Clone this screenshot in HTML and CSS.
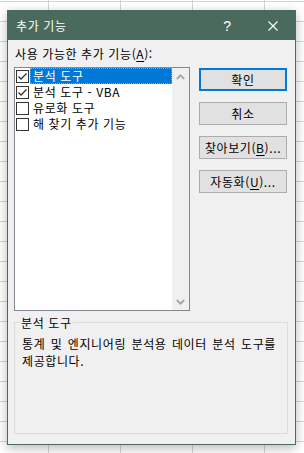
FILE: index.html
```html
<!DOCTYPE html>
<html lang="ko">
<head>
<meta charset="utf-8">
<link rel="stylesheet" href="styles.css">
</head>
<body>
<div class="dialog">
  <div class="titlebar">
    <span class="title">추가 기능</span>
    <span class="tb-btn help">?</span>
    <span class="tb-btn close">
      <svg width="10" height="10" viewBox="0 0 10 10"><path d="M0.5 0.5 L9.5 9.5 M9.5 0.5 L0.5 9.5" stroke="#fff" stroke-width="1.1" fill="none"/></svg>
    </span>
  </div>
  <div class="content">
    <div class="label">사용 가능한 추가 기능(<u>A</u>):</div>
    <div class="main">
      <div class="listbox">
        <ul class="items">
          <li class="item selected">
            <span class="cb"><svg width="11" height="11" viewBox="0 0 11 11"><path d="M1.5 5.5 L4 8 L9.5 2.5" stroke="#333" stroke-width="1.3" fill="none"/></svg></span>
            <span class="text">분석 도구</span>
          </li>
          <li class="item">
            <span class="cb"><svg width="11" height="11" viewBox="0 0 11 11"><path d="M1.5 5.5 L4 8 L9.5 2.5" stroke="#333" stroke-width="1.3" fill="none"/></svg></span>
            <span class="text">분석 도구 - VBA</span>
          </li>
          <li class="item">
            <span class="cb"></span>
            <span class="text">유로화 도구</span>
          </li>
          <li class="item">
            <span class="cb"></span>
            <span class="text">해 찾기 추가 기능</span>
          </li>
        </ul>
        <div class="scrollbar">
          <span class="sb-btn"><svg width="9" height="6" viewBox="0 0 9 6"><path d="M0.8 5 L4.5 1.3 L8.2 5" stroke="#a6a6a6" stroke-width="1.8" fill="none"/></svg></span>
          <span class="sb-btn"><svg width="9" height="6" viewBox="0 0 9 6"><path d="M0.8 1 L4.5 4.7 L8.2 1" stroke="#a6a6a6" stroke-width="1.8" fill="none"/></svg></span>
        </div>
      </div>
      <div class="buttons">
        <button class="btn default">확인</button>
        <button class="btn">취소</button>
        <button class="btn">찾아보기(<u>B</u>)...</button>
        <button class="btn">자동화(<u>U</u>)...</button>
      </div>
    </div>
    <fieldset class="group">
      <legend>분석 도구</legend>
      <p class="desc">통계 및 엔지니어링 분석용 데이터 분석 도구를<br>제공합니다.</p>
    </fieldset>
  </div>
</div>
</body>
</html>
```
FILE: styles.css
```css
* { box-sizing: border-box; }
html, body { margin: 0; padding: 0; }
body {
  width: 304px;
  height: 453px;
  overflow: hidden;
  background-color: #ffffff;
  background-image:
    linear-gradient(to right, #d4d4d4 1px, transparent 1px),
    linear-gradient(to bottom, #d4d4d4 1px, transparent 1px);
  background-size: 72px 100%, 100% 20px;
  background-position: 48px 0, 0 1px;
  font-family: "Noto Sans CJK KR", "Noto Sans", sans-serif;
  font-size: 12px;
  letter-spacing: 0.6px;
  color: #000;
  padding-top: 10px;
  padding-left: 7px;
}
.dialog {
  width: 289px;
  height: 435px;
  border: 1px solid #4a6a5e;
  background: #f0f0f0;
  box-shadow: 0 3px 10px rgba(0,0,0,0.28);
  display: flex;
  flex-direction: column;
}
.titlebar {
  height: 29px;
  background: #4a6a5e;
  display: flex;
  align-items: center;
  color: #fff;
  padding-left: 8px;
  flex: none;
}
.title { font-size: 12px; line-height: 16px; }
.tb-btn {
  width: 45px;
  height: 29px;
  display: flex;
  align-items: center;
  justify-content: center;
}
.help {
  margin-left: auto;
  font-family: "Liberation Sans", sans-serif;
  font-size: 14px;
}
.content {
  padding: 5px 7px 0 6px;
  display: flex;
  flex-direction: column;
}
.label {
  line-height: 17px;
  margin-left: 1px;
}
u { text-decoration: underline; text-underline-offset: 2px; }
.main {
  margin-top: 5px;
  display: grid;
  grid-template-columns: 176px 88px;
  column-gap: 9px;
}
.listbox {
  height: 244px;
  border: 1px solid #828790;
  background: #fff;
  display: flex;
}
.items {
  list-style: none;
  margin: 0;
  padding: 0;
  flex: 1;
}
.item {
  height: 16px;
  display: flex;
  align-items: center;
  padding-left: 1px;
}
.cb {
  width: 13px;
  height: 13px;
  border: 1px solid #333;
  background: #fff;
  display: flex;
  align-items: center;
  justify-content: center;
  flex: none;
}
.text {
  margin-left: 1px;
  height: 16px;
  line-height: 14px;
  padding: 0 4px 0 2px;
  border: 1px solid transparent;
  white-space: nowrap;
  flex: 1;
}
.selected .text {
  background: #0078d7;
  color: #fff;
  border: 1px dotted #e8902a;
}
.scrollbar {
  width: 17px;
  background: #f0f0f0;
  display: flex;
  flex-direction: column;
  justify-content: space-between;
  flex: none;
}
.sb-btn {
  height: 17px;
  display: flex;
  align-items: center;
  justify-content: center;
}
.buttons {
  display: flex;
  flex-direction: column;
  gap: 11px;
  padding-top: 1px;
}
.btn {
  height: 23px;
  width: 88px;
  border: 1px solid #adadad;
  background: #e1e1e1;
  font-family: "Noto Sans CJK KR", "Noto Sans", sans-serif;
  font-size: 12px;
  letter-spacing: 0.6px;
  line-height: 16px;
  color: #000;
  padding: 0;
  margin: 0;
}
.btn.default {
  border: 2px solid #0078d7;
}
.group {
  margin: 3px 0 0 0;
  width: 274px;
  height: 120px;
  border: 1px solid #dcdcdc;
  padding: 0 0 0 5px;
}
.group legend {
  padding: 0 1px;
  line-height: 17px;
}
.desc {
  margin: 4px 0 0 2px;
  line-height: 17px;
  word-spacing: 1.5px;
}
```
